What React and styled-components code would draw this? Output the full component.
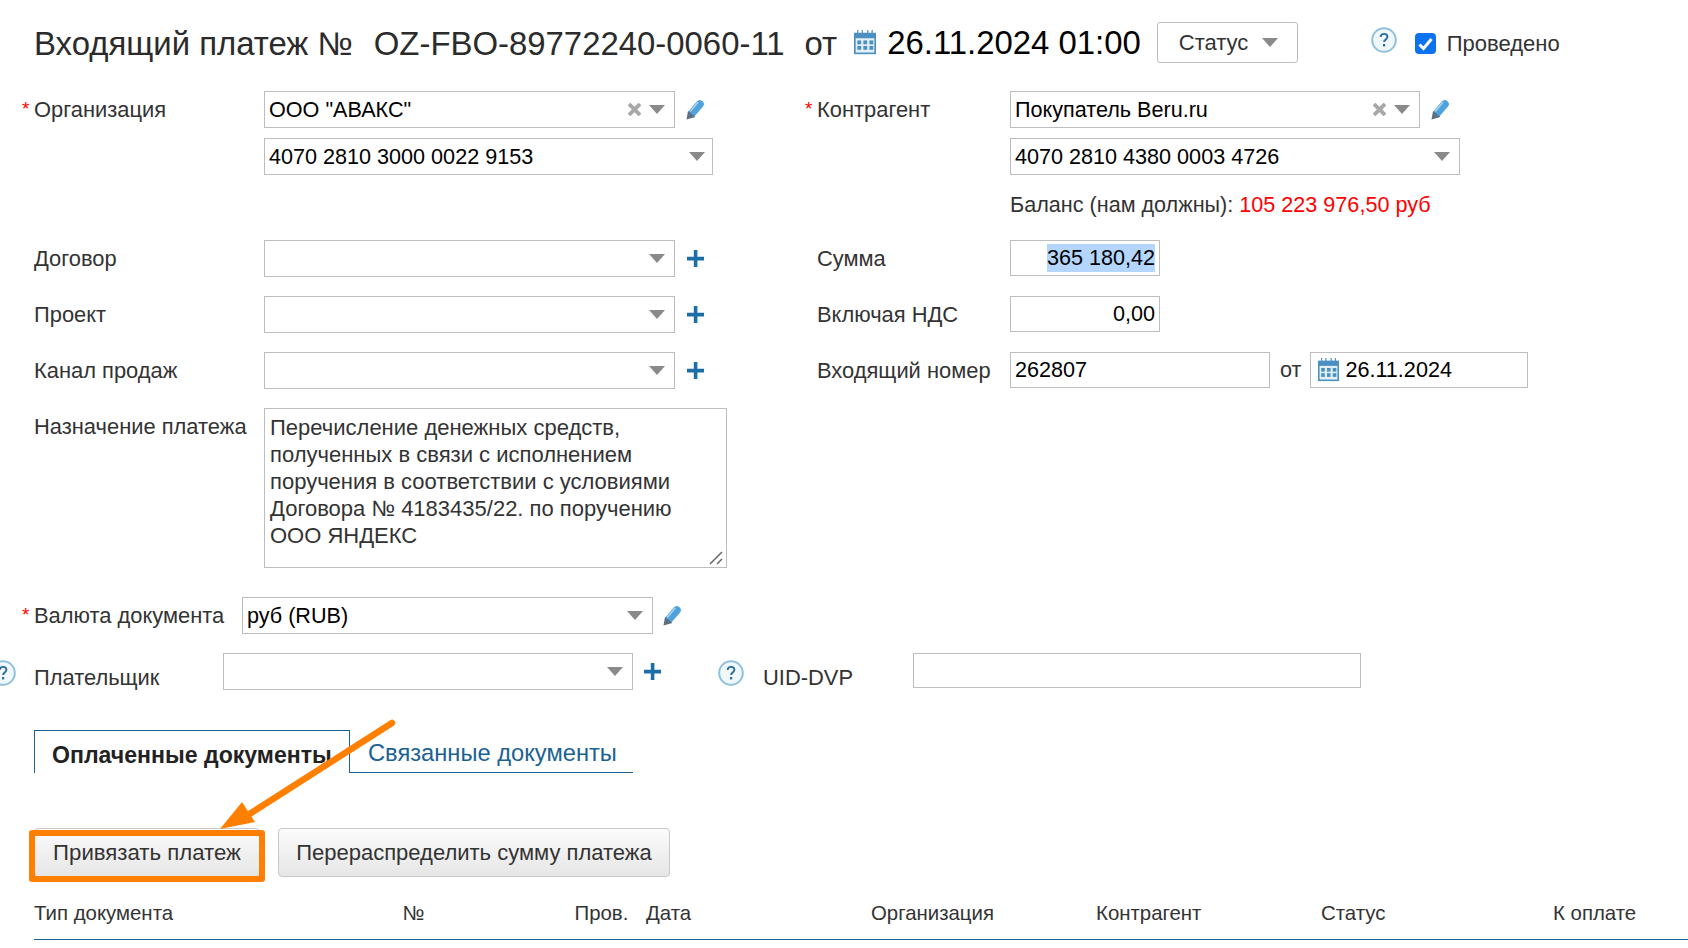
import React from "react";
import styled, { createGlobalStyle } from "styled-components";

const Global = createGlobalStyle`
  html, body { margin: 0; padding: 0; background: #fff; }
  body { font-family: "Liberation Sans", Arial, sans-serif; font-size: 21.6px; color: #333; }
  * { box-sizing: border-box; }
`;

const Page = styled.div`
  position: relative;
  width: 1688px;
  height: 948px;
  overflow: hidden;
  padding: 22px 0 0 34px;
`;

const TitleRow = styled.div`
  display: flex;
  align-items: center;
  height: 41px;
  white-space: nowrap;
`;
const TitleText = styled.span`
  font-size: 32.9px;
  color: ${(p) => p.$color || "#2b2b2b"};
  margin-left: ${(p) => p.$ml || 0}px;
  padding-top: ${(p) => p.$pt || 0}px;
`;
const StatusButton = styled.div`
  width: 141px;
  height: 41px;
  margin-left: 16px;
  border: 1px solid #bdbdbd;
  border-radius: 3px;
  display: flex;
  align-items: center;
  padding-left: 21px;
  gap: 14px;
  font-size: 22px;
  color: #333;
`;
const CheckWrap = styled.div`
  display: flex;
  align-items: center;
  margin-left: 18px;
  padding-top: 2px;
  gap: 11px;
  font-size: 22px;
  color: #333;
`;
const CheckBox = styled.span`
  width: 21px;
  height: 21px;
  border-radius: 4px;
  background: #0b73f0;
  display: flex;
  align-items: center;
  justify-content: center;
`;

const Columns = styled.div`
  display: grid;
  grid-template-columns: 783px 1fr;
  margin-top: 28px;
`;
const Column = styled.div`
  display: flex;
  flex-direction: column;
`;
const Row = styled.div`
  display: flex;
  align-items: ${(p) => p.$align || "center"};
  margin-top: ${(p) => p.$mt || 0}px;
  white-space: nowrap;
`;
const Label = styled.div`
  position: relative;
  width: ${(p) => p.$w || 230}px;
  flex: none;
  color: #333;
  font-size: 21.9px;
  padding-top: ${(p) => p.$pt || 0}px;
`;
const Star = styled.span`
  position: absolute;
  left: -12px;
  top: 1px;
  color: #f00;
  font-size: 19px;
`;

const SelectBox = styled.div`
  position: relative;
  width: ${(p) => p.$w}px;
  height: ${(p) => p.$h || 37}px;
  flex: none;
  border: 1px solid #bdbdbd;
  background: #fff;
  display: flex;
  align-items: center;
  padding: 0 4px;
  color: #000;
`;
const SelectIcons = styled.span`
  margin-left: auto;
  display: flex;
  align-items: center;
  gap: 8px;
  padding-right: ${(p) => p.$pr}px;
`;
const Input = styled.div`
  width: ${(p) => p.$w}px;
  height: ${(p) => p.$h || 36}px;
  flex: none;
  border: 1px solid #bdbdbd;
  display: flex;
  align-items: center;
  justify-content: ${(p) => (p.$right ? "flex-end" : "flex-start")};
  padding: 0 4px;
  color: #000;
`;
const Selected = styled.span`
  background: #b4d5fe;
  padding: 1px 0;
`;
const Inline = styled.span`
  margin: ${(p) => p.$mt || 0}px ${(p) => p.$mr || 0}px ${(p) => p.$mb || 0}px ${(p) => p.$ml || 0}px;
  display: inline-flex;
  color: #333;
`;
const Balance = styled.div`
  margin-top: 17px;
  height: 26px;
  line-height: 26px;
  margin-left: 193px;
  color: #333;
  white-space: nowrap;
`;
const Red = styled.span`
  color: #f00;
`;
const TextArea = styled.div`
  position: relative;
  width: 463px;
  height: 160px;
  border: 1px solid #bdbdbd;
  padding: 5px 5px;
  font-size: 22px;
  line-height: 27px;
  color: #333;
  white-space: pre-line;
`;
const Grip = styled.svg`
  position: absolute;
  right: 1px;
  bottom: 1px;
`;

const Tabs = styled.div`
  display: flex;
  margin-top: 39px;
  width: 599px;
  height: 43px;
`;
const ActiveTab = styled.div`
  width: 316px;
  border: 1px solid #1b6293;
  border-bottom: none;
  padding: 11px 0 0 17px;
  font-size: 23.1px;
  font-weight: bold;
  color: #222;
  white-space: nowrap;
`;
const Tab = styled.div`
  flex: 1;
  border-bottom: 1px solid #1b6293;
  padding: 10px 0 0 18px;
  font-size: 23.7px;
  color: #1b6293;
  white-space: nowrap;
`;

const ButtonRow = styled.div`
  display: flex;
  margin-top: 55px;
  gap: 18px;
`;
const Button = styled.div`
  position: relative;
  height: 49px;
  width: ${(p) => p.$w}px;
  border: 1px solid #c9c9c9;
  border-radius: 4px;
  background: linear-gradient(#fbfbfb, #e6e6e6);
  display: flex;
  align-items: center;
  justify-content: center;
  font-size: ${(p) => p.$fs}px;
  color: #333;
  white-space: nowrap;
`;
const Highlight = styled.div`
  position: absolute;
  left: -6px;
  top: 1px;
  width: 236px;
  height: 52px;
  border: 6px solid #ff8000;
  border-radius: 3px;
`;

const TableHead = styled.div`
  display: grid;
  grid-template-columns: 368.5px 172px 71.5px 225px 225px 225px 232px 1fr;
  margin-top: 22px;
  height: 41px;
  border-bottom: 1px solid #1b6293;
  font-size: 20.4px;
  color: #333;
  white-space: nowrap;
  line-height: 28px;
`;

const Arrow = styled.svg`
  position: absolute;
  left: 0;
  top: 0;
  pointer-events: none;
`;
const EdgeHelp = styled.span`
  display: inline-flex;
  margin: 7px 18px 0 -44px;
`;

const Caret = () => (
  <svg width="16" height="9" viewBox="0 0 16 9">
    <path d="M0 0h16L8 9z" fill="#8a8a8a" />
  </svg>
);
const Cross = () => (
  <svg width="13" height="13" viewBox="0 0 13 13">
    <path d="M1 1l11 11M12 1L1 12" stroke="#a8a8a8" strokeWidth="3.8" />
  </svg>
);
const Pencil = () => (
  <svg width="20" height="22" viewBox="0 0 20 22">
    <path d="M14.800 5.200L7.200 14" stroke="#4ea3dc" strokeWidth="8" strokeLinecap="round" />
    <path d="M12.800 3.600L5.600 12" stroke="#a9d3ef" strokeWidth="1.600" strokeLinecap="round" />
    <path d="M3 12L10.500 18 1.500 20.500z" fill="#5d6f80" />
  </svg>
);
const Plus = () => (
  <svg width="19" height="19" viewBox="0 0 19 19">
    <path d="M7.800 1h3.600v6.800H18v3.600h-6.600V18H7.800v-6.600H1V7.800h6.800z" fill="#1b6ea6" />
  </svg>
);
const Calendar = ({ size = 22 }) => (
  <svg width={size} height={size * 1.1} viewBox="0 0 20 22">
    <path d="M3 0h1v3H3zM7 0h1v3H7zM12 0h1v3h-1zM16 0h1v3h-1z" fill="#3f87b8" />
    <rect x="0" y="2.500" width="20" height="19.500" fill="#4b90c0" />
    <rect x="1.500" y="7.500" width="17" height="13" fill="#e4f0f8" />
    {[3, 8.500, 14].map((x) =>
      [9.500, 14.500].map((y) => (
        <rect key={x + "-" + y} x={x} y={y} width="3.500" height="3.500" fill="#4b90c0" />
      ))
    )}
  </svg>
);
const Help = () => (
  <svg width="26" height="26" viewBox="0 0 26 26">
    <circle cx="13" cy="13" r="11.800" fill="#f1f8fc" stroke="#8fc1dc" strokeWidth="2" />
    <path d="M9.600 10c.2-2 1.600-3.100 3.500-3.100s3.300 1.100 3.300 2.900c0 2.600-3.300 2.700-3.300 5.200" fill="none" stroke="#2a6d9c" strokeWidth="1.900" />
    <rect x="12" y="17" width="2.200" height="2.400" fill="#2a6d9c" />
  </svg>
);
const Tick = () => (
  <svg width="15" height="14" viewBox="0 0 15 14">
    <path d="M1.500 7.500L5.500 11.500 13.500 2" fill="none" stroke="#fff" strokeWidth="3" />
  </svg>
);

const Select = ({ w, h, value, clear, pr = 5 }) => (
  <SelectBox $w={w} $h={h}>
    {value}
    <SelectIcons $pr={pr}>
      {clear && <Cross />}
      <Caret />
    </SelectIcons>
  </SelectBox>
);

const purpose = `Перечисление денежных средств,
полученных в связи с исполнением
поручения в соответствии с условиями
Договора № 4183435/22. по поручению
ООО ЯНДЕКС`;

const columns = ["Тип документа", "№", "Пров.", "Дата", "Организация", "Контрагент", "Статус", "К оплате"];

export default function App() {
  return (
    <Page>
      <Global />
      <TitleRow>
        <TitleText $pt={3}>Входящий платеж №</TitleText>
        <TitleText $pt={3} $ml={21}>OZ-FBO-89772240-0060-11</TitleText>
        <TitleText $pt={3} $ml={20}>от</TitleText>
        <Inline $ml={17} $mr={11}><Calendar /></Inline>
        <TitleText $color="#000">26.11.2024 01:00</TitleText>
        <StatusButton>Статус <Caret /></StatusButton>
        <Inline $ml={73} $mb={6}><Help /></Inline>
        <CheckWrap><CheckBox><Tick /></CheckBox>Проведено</CheckWrap>
      </TitleRow>

      <Columns>
        <Column>
          <Row>
            <Label><Star>*</Star>Организация</Label>
            <Select w={411} value='ООО "АВАКС"' clear />
            <Inline $ml={10}><Pencil /></Inline>
          </Row>
          <Row $mt={10}>
            <Label />
            <Select w={449} value="4070 2810 3000 0022 9153" pr={3} />
          </Row>
          <Row $mt={65}>
            <Label>Договор</Label>
            <Select w={411} />
            <Inline $ml={11}><Plus /></Inline>
          </Row>
          <Row $mt={19}>
            <Label>Проект</Label>
            <Select w={411} />
            <Inline $ml={11}><Plus /></Inline>
          </Row>
          <Row $mt={19}>
            <Label>Канал продаж</Label>
            <Select w={411} />
            <Inline $ml={11}><Plus /></Inline>
          </Row>
          <Row $mt={19} $align="flex-start">
            <Label $pt={6}>Назначение платежа</Label>
            <TextArea>
              {purpose}
              <Grip width="16" height="16" viewBox="0 0 16 16">
                <path d="M1 14L13 2M8 14l5-5" stroke="#666" strokeWidth="1.500" />
              </Grip>
            </TextArea>
          </Row>
        </Column>
        <Column>
          <Row>
            <Label $w={193}><Star>*</Star>Контрагент</Label>
            <Select w={410} value="Покупатель Beru.ru" clear />
            <Inline $ml={10}><Pencil /></Inline>
          </Row>
          <Row $mt={10}>
            <Label $w={193} />
            <Select w={450} value="4070 2810 4380 0003 4726" pr={5} />
          </Row>
          <Balance>Баланс (нам должны): <Red>105 223 976,50 руб</Red></Balance>
          <Row $mt={22}>
            <Label $w={193} $pt={2}>Сумма</Label>
            <Input $w={150} $right><Selected>365 180,42</Selected></Input>
          </Row>
          <Row $mt={20}>
            <Label $w={193} $pt={2}>Включая НДС</Label>
            <Input $w={150} $right>0,00</Input>
          </Row>
          <Row $mt={20}>
            <Label $w={193} $pt={2}>Входящий номер</Label>
            <Input $w={260}>262807</Input>
            <Inline $ml={10} $mr={9}>от</Inline>
            <Input $w={218}>
              <Inline $ml={3} $mr={6}><Calendar size={21} /></Inline>26.11.2024
            </Input>
          </Row>
        </Column>
      </Columns>

      <Row $mt={29}>
        <Label $w={208}><Star>*</Star>Валюта документа</Label>
        <Select w={411} value="руб (RUB)" />
        <Inline $ml={9}><Pencil /></Inline>
      </Row>
      <Row $mt={19} $align="flex-start">
        <EdgeHelp><Help /></EdgeHelp>
        <Label $w={189} $pt={12}>Плательщик</Label>
        <Select w={410} />
        <Inline $ml={10} $mt={9}><Plus /></Inline>
        <Inline $ml={56} $mr={19} $mt={7}><Help /></Inline>
        <Label $w={150} $pt={12}>UID-DVP</Label>
        <Input $w={448} $h={35} />
      </Row>

      <Tabs>
        <ActiveTab>Оплаченные документы</ActiveTab>
        <Tab>Связанные документы</Tab>
      </Tabs>

      <ButtonRow>
        <Button $w={226} $fs={22.2}>
          Привязать платеж
          <Highlight />
        </Button>
        <Button $w={392} $fs={22}>Перераспределить сумму платежа</Button>
      </ButtonRow>

      <TableHead>
        {columns.map((c) => <span key={c}>{c}</span>)}
      </TableHead>

      <Arrow width="1688" height="948" viewBox="0 0 1688 948">
        <path d="M392 723L240 820" stroke="#ff8000" strokeWidth="6.500" strokeLinecap="round" fill="none" />
        <path d="M220 829L242 802 255 822z" fill="#ff8000" />
      </Arrow>
    </Page>
  );
}
